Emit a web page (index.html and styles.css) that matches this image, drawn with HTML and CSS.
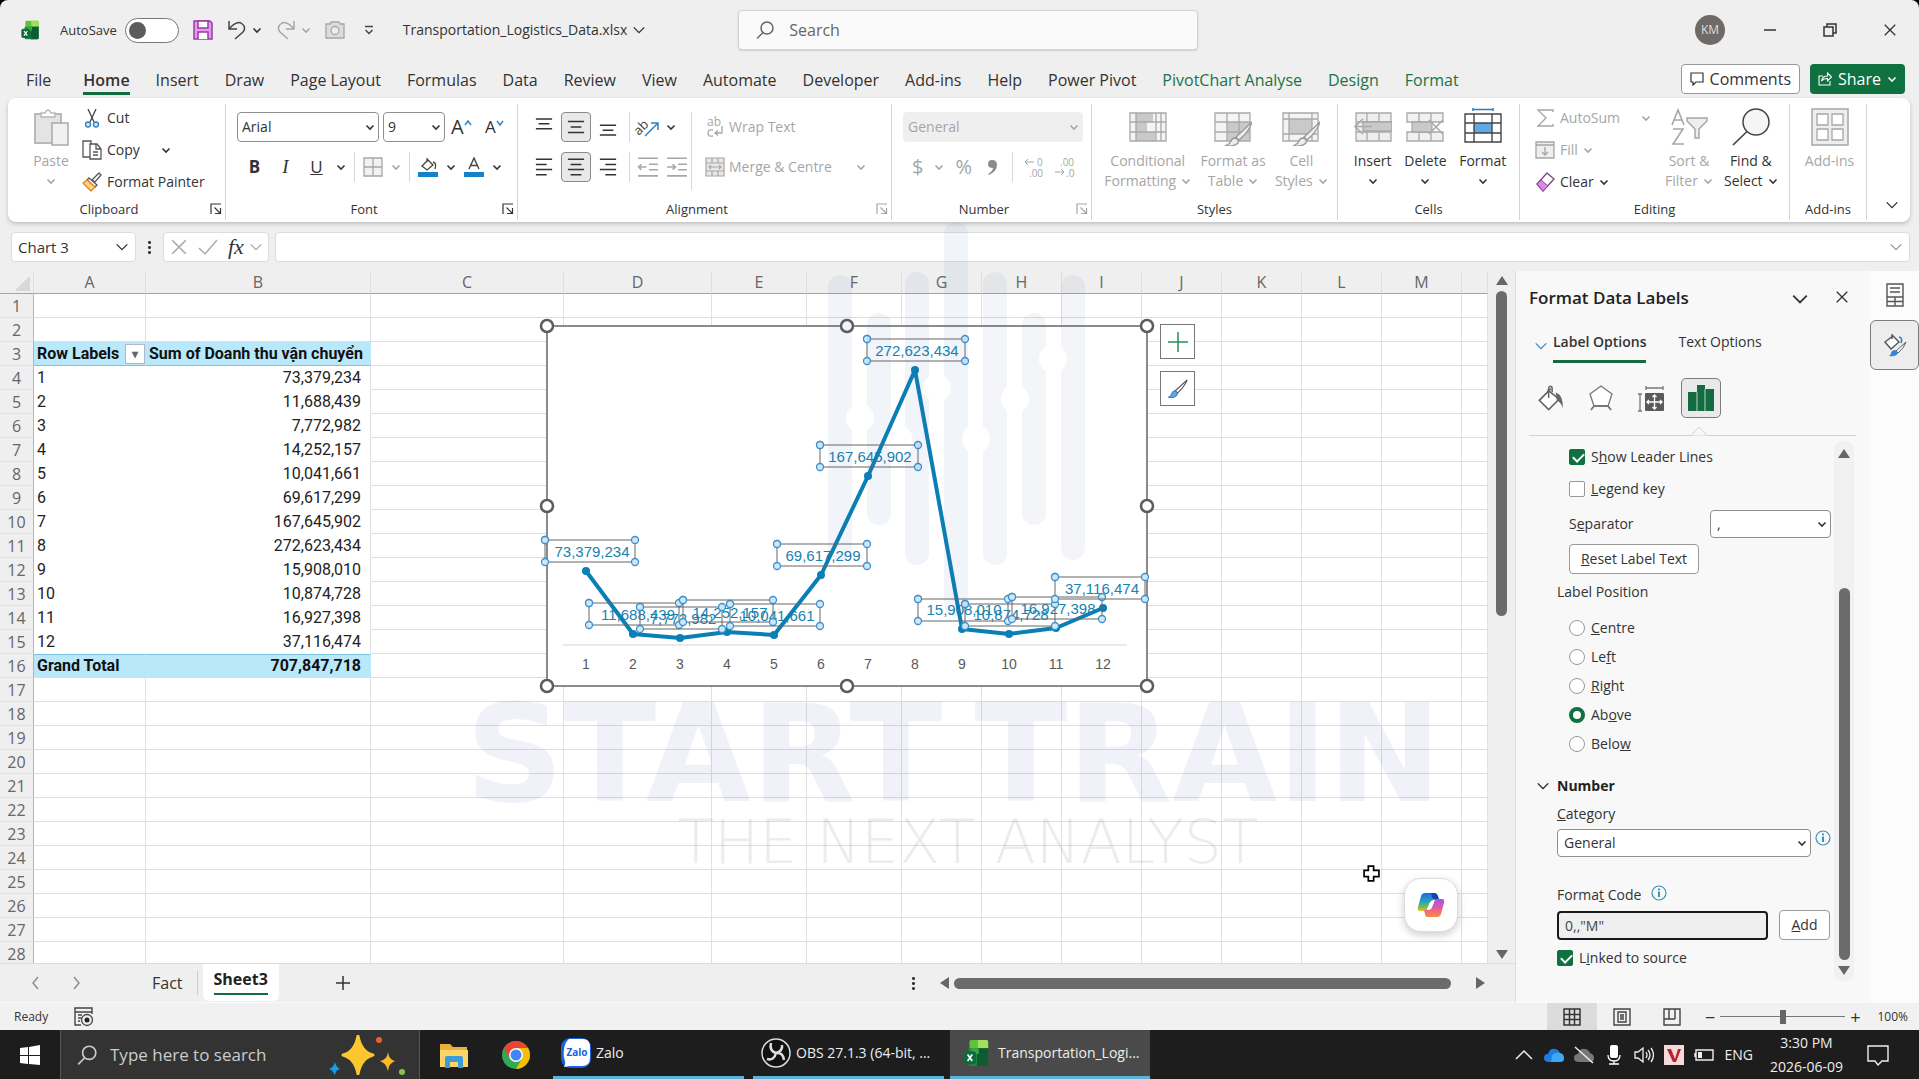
FILE: index.html
```html
<!DOCTYPE html>
<html lang="en">
<head>
<meta charset="utf-8">
<title>Transportation_Logistics_Data.xlsx - Excel</title>
<link rel="stylesheet" href="styles.css">
</head>
<body>
<svg class="sprite" aria-hidden="true">
  <symbol id="chev" viewBox="0 0 10 10"><path d="M1.500 3.500 5 7l3.500-3.500" fill="none" stroke="currentColor" stroke-width="1.600"/></symbol>
  <symbol id="chevbig" viewBox="0 0 16 16"><path d="M2 5l6 6 6-6" fill="none" stroke="currentColor" stroke-width="1.600"/></symbol>
  <symbol id="launch" viewBox="0 0 12 12"><path d="M1 11V1h10M4.500 4.500l5.500 5.500M10.500 5v5.500H5" fill="none" stroke="currentColor" stroke-width="1.200"/></symbol>
  <symbol id="close" viewBox="0 0 16 16"><path d="M2 2l12 12M14 2 2 14" stroke="currentColor" stroke-width="1.500"/></symbol>
  <symbol id="lens" viewBox="0 0 20 20"><circle cx="12" cy="8" r="6" fill="none" stroke="currentColor" stroke-width="1.500"/><path d="M8 12.500 2 18.500" stroke="currentColor" stroke-width="1.500"/></symbol>
  <symbol id="excel" viewBox="0 0 26 30"><path d="M6 3q0-2 2-2h16q2 0 2 2v9H6z" fill="#5fc03c"/><path d="M15 1h9q2 0 2 2v7H15z" fill="#a0e05c"/><path d="M5 10h21v17q0 2-2 2H7q-2 0-2-2z" fill="#1a8a46"/><path d="M14 10h12v17q0 2-2 2H14z" fill="#0f5c33"/><path d="M8 10h8v6H8z" fill="#3aa64a"/><rect y="13" width="13" height="14" rx="3" fill="#0e6b3c"/><path d="M4 16.500l5 7M9 16.500l-5 7" stroke="#fff" stroke-width="1.800"/></symbol>
  <symbol id="al-left" viewBox="0 0 20 20"><path d="M1 1.500h18M1 7.200h12M1 12.800h18M1 18.500h12" stroke="currentColor" stroke-width="1.700"/></symbol>
  <symbol id="al-mid" viewBox="0 0 20 20"><path d="M1 1.500h18M4 7.200h12M1 12.800h18M4 18.500h12" stroke="currentColor" stroke-width="1.700"/></symbol>
  <symbol id="al-right" viewBox="0 0 20 20"><path d="M1 1.500h18M7 7.200h12M1 12.800h18M7 18.500h12" stroke="currentColor" stroke-width="1.700"/></symbol>
  <symbol id="v-top" viewBox="0 0 20 20"><path d="M1 1h18M4 6.500h12M1 12h18" stroke="currentColor" stroke-width="1.700"/></symbol>
  <symbol id="v-mid" viewBox="0 0 20 20"><path d="M1 4h18M4 10h12M1 16h18" stroke="currentColor" stroke-width="1.700"/></symbol>
  <symbol id="v-bot" viewBox="0 0 20 20"><path d="M1 8h18M4 13.500h12M1 19h18" stroke="currentColor" stroke-width="1.700"/></symbol>
  <symbol id="outdent" viewBox="0 0 20 20"><path d="M1 2h18M11 7.500h8M11 12.500h8M1 18h18M8.500 10h-7M4 7.500 1.500 10 4 12.500" fill="none" stroke="currentColor" stroke-width="1.500"/></symbol>
  <symbol id="indent" viewBox="0 0 20 20"><path d="M1 2h18M11 7.500h8M11 12.500h8M1 18h18M1 10h7M6 7.500 8.500 10 6 12.500" fill="none" stroke="currentColor" stroke-width="1.500"/></symbol>
  <symbol id="bucket" viewBox="0 0 24 22"><path d="M9 4 19 12l-9 9-8-8L12 3" fill="#fff" stroke="currentColor" stroke-width="1.400"/><path d="M10 11V3q0-2 1.500-2T13 3v3" fill="none" stroke="currentColor" stroke-width="1.300"/><path d="M16 6q7 3 6 14-1-5-5-7z" fill="currentColor"/></symbol>
  <symbol id="brush" viewBox="0 0 24 24"><path d="M22 2 9 14l2.500 2.500Q20 8 22 2z" fill="#fff" stroke="#555" stroke-width="1.300"/><path d="M8.500 14q3 .5 3 3.500-2 5-10 3.500 3-1 3.500-4 1-3 3.500-3z" fill="#5ba7ea" stroke="#2670b8"/></symbol>
  <symbol id="info" viewBox="0 0 16 16"><circle cx="8" cy="8" r="7" fill="none" stroke="currentColor" stroke-width="1.200"/><path d="M8 6.500v5.500M8 3.500v1.800" stroke="currentColor" stroke-width="2"/></symbol>
  <marker id="grip" markerUnits="userSpaceOnUse" markerWidth="10" markerHeight="10" refX="5" refY="5"><circle cx="5" cy="5" r="3.500" fill="#cde8fb" stroke="#3f8fc9" stroke-width="1.300"/></marker>
  <marker id="dot" markerUnits="userSpaceOnUse" markerWidth="10" markerHeight="10" refX="5" refY="5"><circle cx="5" cy="5" r="4" fill="#0a7fb5"/></marker>
</svg>

<div class="app">
<header class="titlebar">
  <svg class="i20 xl"><use href="#excel"/></svg>
  <label class="autosave">AutoSave <input type="checkbox" class="toggle"></label>
  <div class="quick">
    <button aria-label="Save"><svg class="i20" viewBox="0 0 20 20"><path d="M1 1h16l2 2v16H1z" fill="#e49bea" stroke="#9a3aa6" stroke-width="1.500"/><path d="M5 1h10v7H5zM5 19v-7h10v7" fill="#fff" stroke="#9a3aa6" stroke-width="1.500"/></svg></button>
    <button aria-label="Undo"><svg class="i20" viewBox="0 0 20 20"><path d="M2 1v8h8M2 9Q9 1 14 3q6 4 2 9l-8 7" fill="none" stroke="#444" stroke-width="1.500"/></svg><svg class="chev"><use href="#chev"/></svg></button>
    <button aria-label="Redo" class="off"><svg class="i20" viewBox="0 0 20 20"><path d="M18 1v8h-8M18 9Q11 1 6 3q-6 4-2 9l8 7" fill="none" stroke="currentColor" stroke-width="1.500"/></svg><svg class="chev"><use href="#chev"/></svg></button>
    <button aria-label="Camera" class="off"><svg class="i20" viewBox="0 0 20 20"><path d="M1 4h4l1-2h8l1 2h4v14H1z" fill="#ddd" stroke="currentColor" stroke-width="1.300"/><circle cx="10" cy="10.500" r="4" fill="#eee" stroke="currentColor" stroke-width="1.300"/></svg></button>
    <button aria-label="Customise"><svg class="chev" viewBox="0 0 10 10"><path d="M1 1.500h8M1.500 5 5 8.500 8.500 5" fill="none" stroke="#444" stroke-width="1.400"/></svg></button>
  </div>
  <button class="filename">Transportation_Logistics_Data.xlsx <svg class="i14"><use href="#chevbig"/></svg></button>
  <label class="search"><svg class="i20"><use href="#lens"/></svg><input type="search" placeholder="Search" aria-label="Search"></label>
  <div class="wincontrols">
    <span class="avatar">KM</span>
    <button aria-label="Minimise"><svg class="i14" viewBox="0 0 14 14"><path d="M1 7h12" stroke="#333" stroke-width="1.500"/></svg></button>
    <button aria-label="Restore"><svg class="i14" viewBox="0 0 14 14"><path d="M1 4h9v9H1zM4 4V1h9v9h-3" fill="none" stroke="#333" stroke-width="1.500"/></svg></button>
    <button aria-label="Close"><svg class="i14"><use href="#close"/></svg></button>
  </div>
</header>

<nav class="tabs">
  <a href="#">File</a><a href="#" class="current">Home</a><a href="#">Insert</a><a href="#">Draw</a><a href="#">Page Layout</a><a href="#">Formulas</a><a href="#">Data</a><a href="#">Review</a><a href="#">View</a><a href="#">Automate</a><a href="#">Developer</a><a href="#">Add-ins</a><a href="#">Help</a><a href="#">Power Pivot</a><a href="#" class="ctx">PivotChart Analyse</a><a href="#" class="ctx">Design</a><a href="#" class="ctx">Format</a>
  <span class="grow"></span>
  <button class="comments"><svg class="i14" viewBox="0 0 14 14"><path d="M1 1h12v9H6l-3 3v-3H1z" fill="none" stroke="#333" stroke-width="1.200"/></svg>Comments</button>
  <button class="share"><svg class="i14" viewBox="0 0 14 14"><path d="M5 4H1v9h11V9M3.500 9q1-5 6-5V1l4 4-4 4V6.500q-4 0-6 2.500z" fill="none" stroke="#fff" stroke-width="1.100"/></svg>Share<svg class="chev"><use href="#chev"/></svg></button>
</nav>

<section class="ribbon" aria-label="Home ribbon">
  <div class="group">
    <div class="tools clip">
      <button class="big off"><svg class="i38" viewBox="0 0 38 38"><path d="M3 6h26v29H3z" fill="#e4e4e4" stroke="#b9b9b9" stroke-width="2"/><path d="M9 9V5h4q3-6 6 0h4v4z" fill="#fff" stroke="#b9b9b9" stroke-width="1.500"/><path d="M20 15h16v22H20z" fill="#f1f1f1" stroke="#a9a9a9" stroke-width="1.500"/></svg>Paste<svg class="chev"><use href="#chev"/></svg></button>
      <div class="stack">
        <button><svg class="i20" viewBox="0 0 20 20"><path d="M6 1l6 13M14 1 8 14" stroke="#444" stroke-width="1.300"/><circle cx="6" cy="16.500" r="2.500" fill="#cfe4f7" stroke="#2f7fc0" stroke-width="1.300"/><circle cx="14" cy="16.500" r="2.500" fill="#cfe4f7" stroke="#2f7fc0" stroke-width="1.300"/></svg>Cut</button>
        <button><svg class="i20" viewBox="0 0 20 20"><path d="M8 17H1V1h8v3M8 4h7l4 5v10H8zM14 4v5h5M11 12h5M11 15h5" fill="none" stroke="#555" stroke-width="1.300"/></svg>Copy<svg class="chev far"><use href="#chev"/></svg></button>
        <button><svg class="i20" viewBox="0 0 20 20"><path d="M10 8l7-7 2 2-6 7z" fill="#fff" stroke="#555" stroke-width="1.300"/><path d="M7 6l8 7-2 2-8-7z" fill="#fff" stroke="#555" stroke-width="1.300"/><path d="M5 8 1 11l8 8 4-4z" fill="#fbd08b" stroke="#e08a1e" stroke-width="1.300"/></svg>Format Painter</button>
      </div>
    </div>
    <h2>Clipboard<svg class="launch"><use href="#launch"/></svg></h2>
  </div>

  <div class="group">
    <div class="tools rows">
      <div class="row">
        <span class="pick fontname"><select aria-label="Font"><option>Arial</option></select><svg class="chev"><use href="#chev"/></svg></span>
        <span class="pick fontsize"><select aria-label="Font size"><option>9</option></select><svg class="chev"><use href="#chev"/></svg></span>
        <button aria-label="Grow font" class="fontstep">A<svg class="tiny" viewBox="0 0 8 8"><path d="M1 6l3-4 3 4" fill="none" stroke="#2a86c4" stroke-width="1.500"/></svg></button>
        <button aria-label="Shrink font" class="fontstep small">A<svg class="tiny" viewBox="0 0 8 8"><path d="M1 2l3 4 3-4" fill="none" stroke="#2a86c4" stroke-width="1.500"/></svg></button>
      </div>
      <div class="row">
        <button class="fmt b">B</button><button class="fmt it">I</button><button class="fmt u">U</button><svg class="chev"><use href="#chev"/></svg><i class="bar"></i>
        <button class="off" aria-label="Borders"><svg class="i20" viewBox="0 0 20 20"><path d="M1 1h18v18H1zM10 1v18M1 10h18" fill="#f2f2f2" stroke="currentColor" stroke-width="1.300"/></svg></button><svg class="chev off"><use href="#chev"/></svg><i class="bar"></i>
        <button aria-label="Fill colour"><svg class="i20" viewBox="0 0 20 20"><path d="M9 1v4M4 9l6-6 5 5-6 5zM15 5q4 1 2 7" fill="none" stroke="#444" stroke-width="1.300"/><path d="M0 15h20v5H0z" fill="#1581c8"/></svg></button><svg class="chev"><use href="#chev"/></svg>
        <button aria-label="Font colour"><svg class="i20" viewBox="0 0 20 20"><path d="M5 12l5-11 5 11M7 8.500h6" fill="none" stroke="#444" stroke-width="1.400"/><path d="M0 15h20v5H0z" fill="#1581c8"/></svg></button><svg class="chev"><use href="#chev"/></svg>
      </div>
    </div>
    <h2>Font<svg class="launch"><use href="#launch"/></svg></h2>
  </div>

  <div class="group">
    <div class="tools align">
      <div class="rows">
        <div class="row tight">
          <button class="sq" aria-label="Top"><svg class="i18"><use href="#v-top"/></svg></button><button class="sq on" aria-label="Middle"><svg class="i18"><use href="#v-mid"/></svg></button><button class="sq" aria-label="Bottom"><svg class="i18"><use href="#v-bot"/></svg></button><i class="bar"></i>
          <button aria-label="Orientation"><svg class="i22 spill" viewBox="0 0 22 22"><text x="-4" y="14" transform="rotate(-45 6 10)" font-size="13" fill="#444">ab</text><path d="M8 20 20 8M14 7h7v7" fill="none" stroke="#2a86c4" stroke-width="1.500"/></svg></button><svg class="chev"><use href="#chev"/></svg>
        </div>
        <div class="row tight">
          <button class="sq" aria-label="Left"><svg class="i18"><use href="#al-left"/></svg></button><button class="sq on" aria-label="Centre"><svg class="i18"><use href="#al-mid"/></svg></button><button class="sq" aria-label="Right"><svg class="i18"><use href="#al-right"/></svg></button><i class="bar"></i>
          <button class="off" aria-label="Outdent"><svg class="i22"><use href="#outdent"/></svg></button><button class="off" aria-label="Indent"><svg class="i22"><use href="#indent"/></svg></button>
        </div>
      </div>
      <i class="bar tall"></i>
      <div class="rows wrapcol">
        <button class="row off"><svg class="i20 spill" viewBox="0 0 20 20"><text x="2" y="9" font-size="12" fill="currentColor">ab</text><path d="M8 13q-5-1-5 3t5 3M17 9v7h-6M13 13.500l-3 2.500 3 2.500" fill="none" stroke="currentColor" stroke-width="1.300"/></svg>Wrap Text</button>
        <button class="row off"><svg class="i20" viewBox="0 0 20 20"><path d="M1 1h18v18H1zM1 6h18M1 14h18M7 1v5M13 1v5M7 14v5M13 14v5M4 10h12M6 8l-2 2 2 2M14 8l2 2-2 2" fill="#e8e8e8" stroke="currentColor" stroke-width="1.200"/></svg>Merge &amp; Centre<svg class="chev far"><use href="#chev"/></svg></button>
      </div>
    </div>
    <h2>Alignment<svg class="launch off"><use href="#launch"/></svg></h2>
  </div>

  <div class="group">
    <div class="tools rows">
      <div class="row"><span class="pick numfmt off"><select aria-label="Number format" disabled><option>General</option></select><svg class="chev"><use href="#chev"/></svg></span></div>
      <div class="row off numbers"><button class="sym">$</button><svg class="chev"><use href="#chev"/></svg><button class="sym">%</button><button aria-label="Comma style"><svg class="i18" viewBox="0 0 18 18"><path d="M9 2q5 0 5 5 0 6-8 10l-1-1q5-3 5-6-5 0-5-4 0-4 4-4z" fill="#8c8c8c"/></svg></button><i class="bar"></i>
        <button aria-label="Increase decimal"><svg class="i20 spill" viewBox="0 0 20 20"><text x="13" y="9" font-size="10" fill="currentColor">0</text><text x="5" y="20" font-size="10" fill="currentColor">.00</text><path d="M10 5H1M4 2 1 5l3 3" fill="none" stroke="currentColor"/></svg></button>
        <button aria-label="Decrease decimal"><svg class="i20 spill" viewBox="0 0 20 20"><text x="5" y="9" font-size="10" fill="currentColor">.00</text><text x="11" y="20" font-size="10" fill="currentColor">.0</text><path d="M0 15h9M6 12l3 3-3 3" fill="none" stroke="currentColor"/></svg></button></div>
    </div>
    <h2>Number<svg class="launch off"><use href="#launch"/></svg></h2>
  </div>

  <div class="group">
    <div class="tools bigs">
      <button class="big off"><svg class="i38" viewBox="0 0 38 38"><path d="M1 5h36v28H1z" fill="#f4f4f4"/><path d="M7 5h17v9H7zM7 14h11v10H7zM7 24h19v9H7z" fill="#c9c9c9"/><path d="M1 5h36v28H1zM1 14h36M1 24h36M7 5v28M27 5v28M32 5v28" fill="none" stroke="#a9a9a9" stroke-width="1.300"/></svg>Conditional<span>Formatting <svg class="chev"><use href="#chev"/></svg></span></button>
      <button class="big off"><svg class="i38" viewBox="0 0 38 38"><path d="M1 5h35v28H1z" fill="#f4f4f4"/><path d="M13 14h23v19H13z" fill="#c9c9c9"/><path d="M1 5h35v28H1zM1 14h35M1 24h35M13 5v28M25 5v28" fill="none" stroke="#a9a9a9" stroke-width="1.300"/><path d="M38 14 22 29l3 3q10-8 13-18zM21 30q4 1 3 5-4 4-13 3 5-2 6-5 1-3 4-3z" fill="#eee" stroke="#999" stroke-width="1.300"/></svg>Format as<span>Table <svg class="chev"><use href="#chev"/></svg></span></button>
      <button class="big off"><svg class="i38" viewBox="0 0 38 38"><path d="M1 5h35v28H1z" fill="#f4f4f4"/><path d="M7 11h23v15H7z" fill="#c9c9c9"/><path d="M1 5h35v28H1zM1 11h35M1 26h35M7 5v28M30 5v28" fill="none" stroke="#a9a9a9" stroke-width="1.300"/><path d="M38 14 22 29l3 3q10-8 13-18zM21 30q4 1 3 5-4 4-13 3 5-2 6-5 1-3 4-3z" fill="#eee" stroke="#999" stroke-width="1.300"/></svg>Cell<span>Styles <svg class="chev"><use href="#chev"/></svg></span></button>
    </div>
    <h2>Styles</h2>
  </div>

  <div class="group">
    <div class="tools bigs">
      <button class="big"><svg class="i38" viewBox="0 0 38 38"><path d="M2 5h35v28H2zM2 14h35M2 24h35M13 5v28M25 5v28" fill="#eee" stroke="#a9a9a9" stroke-width="1.300"/><path d="M9 14h29v9H9z" fill="#c9c9c9" stroke="#999"/><path d="M18 18.500H1M9 11l-8 7.500L9 26" fill="none" stroke="#aaa" stroke-width="1.600"/></svg>Insert<svg class="chev"><use href="#chev"/></svg></button>
      <button class="big"><svg class="i38" viewBox="0 0 38 38"><path d="M1 5h36v9H1zM1 24h36v9H1zM13 5v9M25 5v9M13 24v9M25 24v9" fill="#f1f1f1" stroke="#a9a9a9" stroke-width="1.300"/><path d="M6 14h20v10H6z" fill="#c9c9c9" stroke="#999"/><path d="M23 12l14 14M37 12 23 26" stroke="#aaa" stroke-width="1.600"/></svg>Delete<svg class="chev"><use href="#chev"/></svg></button>
      <button class="big"><svg class="i38" viewBox="0 0 38 38"><path d="M1 6h36v28H1z" fill="#fff"/><path d="M10 15h18v10H10z" fill="#5cabe8"/><path d="M1 6h36v28H1zM1 15h36M1 25h36M10 6v28M28 6v28" fill="none" stroke="#444" stroke-width="1.400"/><path d="M9 1.500h20M9 0v3M29 0v3" stroke="#2a7ec0" stroke-width="1.500"/></svg>Format<svg class="chev"><use href="#chev"/></svg></button>
    </div>
    <h2>Cells</h2>
  </div>

  <div class="group">
    <div class="tools editing">
      <div class="stack">
        <button class="off"><svg class="i20" viewBox="0 0 20 20"><path d="M18 4V2H3l8 8-8 8h15v-2" fill="none" stroke="currentColor" stroke-width="1.400"/></svg>AutoSum<svg class="chev far"><use href="#chev"/></svg></button>
        <button class="off"><svg class="i20" viewBox="0 0 20 20"><path d="M1 2h18v16H1zM1 5h18" fill="#eee" stroke="currentColor" stroke-width="1.300"/><path d="M10 7v8M7 12l3 3 3-3" fill="none" stroke="currentColor" stroke-width="1.300"/></svg>Fill<svg class="chev"><use href="#chev"/></svg></button>
        <button><svg class="i20" viewBox="0 0 20 20"><path d="M2 12 12 1l7 6L8 19z" fill="#fff" stroke="#7d4a86" stroke-width="1.400"/><path d="M2 12l4-4 7 6-5 5z" fill="#d98be0" stroke="#9a3aa6"/></svg>Clear<svg class="chev"><use href="#chev"/></svg></button>
      </div>
      <button class="big off"><svg class="i38" viewBox="0 0 38 38"><path d="M2 17 8 2l6 15M4 12h8M3 21h10L3 36h11" fill="none" stroke="currentColor" stroke-width="1.600"/><path d="M17 10h20v3l-8 8v9h-4v-9l-8-8z" fill="#eee" stroke="currentColor" stroke-width="1.500"/></svg>Sort &amp;<span>Filter <svg class="chev"><use href="#chev"/></svg></span></button>
      <button class="big"><svg class="i38" viewBox="0 0 38 38"><circle cx="24" cy="14" r="13" fill="#f5f5f5" stroke="#444" stroke-width="1.500"/><path d="M15 23.500 1 37" stroke="#444" stroke-width="1.700"/></svg>Find &amp;<span>Select <svg class="chev"><use href="#chev"/></svg></span></button>
    </div>
    <h2>Editing</h2>
  </div>

  <div class="group">
    <div class="tools bigs">
      <button class="big off"><svg class="i38" viewBox="0 0 38 38"><path d="M1 1h36v36H1z" fill="#eee" stroke="currentColor" stroke-width="1.500"/><path d="M6 6h11v11H6zM21 6h11v11H21zM6 21h11v11H6zM21 21h11v11H21z" fill="#fff" stroke="currentColor" stroke-width="1.300"/></svg>Add-ins</button>
    </div>
    <h2>Add-ins</h2>
  </div>
  <div class="collapse"><svg class="i14"><use href="#chevbig"/></svg></div>
</section>

<div class="formulabar">
  <label class="namebox"><input value="Chart 3" aria-label="Name box"><svg class="i14"><use href="#chevbig"/></svg></label>
  <span class="dots"></span>
  <div class="fx"><svg class="i18"><use href="#close"/></svg><svg class="i20" viewBox="0 0 20 20"><path d="M1 11l6 6L19 3" fill="none" stroke="currentColor" stroke-width="1.500"/></svg><em>fx</em><svg class="i14"><use href="#chevbig"/></svg></div>
  <label class="formula"><input aria-label="Formula"><svg class="i14"><use href="#chevbig"/></svg></label>
</div>

<main class="work">
  <div class="book">
    <div class="sheet">
      <table class="cells">
        <colgroup><col class="rh"><col class="ca"><col class="cb"><col class="cc"><col class="cd"><col class="ce"><col class="cf"><col class="cg"><col class="cg"><col class="cg"><col class="cg"><col class="cg"><col class="cg"><col class="cg"><col></colgroup>
        <thead><tr><th class="corner"><th>A<th>B<th>C<th>D<th>E<th>F<th>G<th>H<th>I<th>J<th>K<th>L<th>M<th></tr></thead>
        <tbody>
        <tr><th>1<td><td><td><td><td><td><td><td><td><td><td><td><td><td></tr>
        <tr><th>2<td><td><td><td><td><td><td><td><td><td><td><td><td><td></tr>
        <tr class="head"><th>3<td><span class="rl">Row Labels <button aria-label="Filter">▾</button></span><td>Sum of Doanh thu vận chuyển<td><td><td><td><td><td><td><td><td><td><td><td></tr>
        <tr class="data"><th>4<td>1<td>73,379,234<td><td><td><td><td><td><td><td><td><td><td><td></tr>
        <tr class="data"><th>5<td>2<td>11,688,439<td><td><td><td><td><td><td><td><td><td><td><td></tr>
        <tr class="data"><th>6<td>3<td>7,772,982<td><td><td><td><td><td><td><td><td><td><td><td></tr>
        <tr class="data"><th>7<td>4<td>14,252,157<td><td><td><td><td><td><td><td><td><td><td><td></tr>
        <tr class="data"><th>8<td>5<td>10,041,661<td><td><td><td><td><td><td><td><td><td><td><td></tr>
        <tr class="data"><th>9<td>6<td>69,617,299<td><td><td><td><td><td><td><td><td><td><td><td></tr>
        <tr class="data"><th>10<td>7<td>167,645,902<td><td><td><td><td><td><td><td><td><td><td><td></tr>
        <tr class="data"><th>11<td>8<td>272,623,434<td><td><td><td><td><td><td><td><td><td><td><td></tr>
        <tr class="data"><th>12<td>9<td>15,908,010<td><td><td><td><td><td><td><td><td><td><td><td></tr>
        <tr class="data"><th>13<td>10<td>10,874,728<td><td><td><td><td><td><td><td><td><td><td><td></tr>
        <tr class="data"><th>14<td>11<td>16,927,398<td><td><td><td><td><td><td><td><td><td><td><td></tr>
        <tr class="data"><th>15<td>12<td>37,116,474<td><td><td><td><td><td><td><td><td><td><td><td></tr>
        <tr class="total"><th>16<td>Grand Total<td>707,847,718<td><td><td><td><td><td><td><td><td><td><td><td></tr>
        <tr><th>17<td><td><td><td><td><td><td><td><td><td><td><td><td><td></tr>
        <tr><th>18<td><td><td><td><td><td><td><td><td><td><td><td><td><td></tr>
        <tr><th>19<td><td><td><td><td><td><td><td><td><td><td><td><td><td></tr>
        <tr><th>20<td><td><td><td><td><td><td><td><td><td><td><td><td><td></tr>
        <tr><th>21<td><td><td><td><td><td><td><td><td><td><td><td><td><td></tr>
        <tr><th>22<td><td><td><td><td><td><td><td><td><td><td><td><td><td></tr>
        <tr><th>23<td><td><td><td><td><td><td><td><td><td><td><td><td><td></tr>
        <tr><th>24<td><td><td><td><td><td><td><td><td><td><td><td><td><td></tr>
        <tr><th>25<td><td><td><td><td><td><td><td><td><td><td><td><td><td></tr>
        <tr><th>26<td><td><td><td><td><td><td><td><td><td><td><td><td><td></tr>
        <tr><th>27<td><td><td><td><td><td><td><td><td><td><td><td><td><td></tr>
        <tr><th>28<td><td><td><td><td><td><td><td><td><td><td><td><td><td></tr>
        </tbody>
      </table>

      <svg class="chart" width="600" height="360" viewBox="0 0 600 360" role="img" aria-label="Line chart of revenue by month">
        <rect width="600" height="360" fill="#fff" stroke="#666" stroke-width="1.500"/>
        <path d="M16 319h564" stroke="#d5d5d5"/>
        <g class="axis"><text x="39" y="343">1</text><text x="86" y="343">2</text><text x="133" y="343">3</text><text x="180" y="343">4</text><text x="227" y="343">5</text><text x="274" y="343">6</text><text x="321" y="343">7</text><text x="368" y="343">8</text><text x="415" y="343">9</text><text x="462" y="343">10</text><text x="509" y="343">11</text><text x="556" y="343">12</text></g>
        <g class="values"><text x="45" y="231">73,379,234</text><text x="91" y="294">11,688,439</text><text x="136" y="298">7,772,982</text><text x="183" y="292">14,252,157</text><text x="230" y="295">10,041,661</text><text x="276" y="235">69,617,299</text><text x="323" y="136">167,645,902</text><text x="370" y="30">272,623,434</text><text x="417" y="289">15,908,010</text><text x="464" y="294">10,874,728</text><text x="511" y="288">16,927,398</text><text x="555" y="268">37,116,474</text></g>
        <path class="series" d="M39 245 86 308 133 312 180 306 227 309 274 249 321 150 368 44 415 303 462 308 509 302 556 282"/>
        <g class="boxes"><path d="M-2 214h90v22h-90z"/><path d="M42 277h90v22h-90z"/><path d="M93 281h82v22h-82z"/><path d="M136 274h90v22h-90z"/><path d="M183 278h90v22h-90z"/><path d="M230 218h90v22h-90z"/><path d="M273 119h98v22h-98z"/><path d="M320 13h98v22h-98z"/><path d="M371 273h90v22h-90z"/><path d="M418 278h90v22h-90z"/><path d="M465 271h90v22h-90z"/><path d="M508 251h90v22h-90z"/></g>
        <g fill="#fff" stroke="#5c5c5c" stroke-width="2.500"><circle r="6"/><circle cx="300" r="6"/><circle cx="600" r="6"/><circle cy="180" r="6"/><circle cx="600" cy="180" r="6"/><circle cy="360" r="6"/><circle cx="300" cy="360" r="6"/><circle cx="600" cy="360" r="6"/></g>
      </svg>
      <div class="chartbtns">
        <button aria-label="Chart elements"><svg class="i22" viewBox="0 0 22 22"><path d="M11 1v20M1 11h20" stroke="#2a8a5a" stroke-width="1.500"/></svg></button>
        <button aria-label="Chart styles"><svg class="i22"><use href="#brush"/></svg></button>
      </div>
      <svg class="cursor" viewBox="0 0 16 16"><path d="M5 1h5v4h5v6h-5v4H5v-4H1V5h4z" fill="#fff" stroke="#000" stroke-width="1.600"/></svg>
      <button class="copilot" aria-label="Copilot"><svg class="i28" viewBox="0 0 28 28"><defs><linearGradient id="cp1" x2="0" y2="1"><stop offset="0" stop-color="#1a6fe0"/><stop offset=".5" stop-color="#2aa5b8"/><stop offset=".8" stop-color="#7ac143"/><stop offset="1" stop-color="#f6c030"/></linearGradient><linearGradient id="cp2" x2="0" y2="1"><stop offset="0" stop-color="#9a58e8"/><stop offset=".5" stop-color="#e85a9c"/><stop offset="1" stop-color="#f98a3c"/></linearGradient></defs><path d="M8 2h9q3 0 3 3l1 4h-4q-3 0-4 3l-2 5q-1 3-3 3H3q-3 0-2-4L4 5q1-3 4-3z" fill="url(#cp1)"/><path d="M20 26h-9q-3 0-3-3l-1-4h4q3 0 4-3l2-5q1-3 3-3h5q3 0 2 4l-3 11q-1 3-4 3z" fill="url(#cp2)"/><path d="M12 2h5q3 0 4 3l1 3h-4q-3 0-3-3t-3-3z" fill="#1a3fb0"/><path d="M13 11h4l-3 7h-4z" fill="#fff"/></svg></button>
    </div>
    <div class="vscroll"><i class="up"></i><i class="thumb"></i><i class="grow"></i><i class="down"></i></div>
    <div class="sheettabs">
      <button class="nav" aria-label="Previous sheet"><svg class="i14" viewBox="0 0 14 14"><path d="M9 1 4 7l5 6" fill="none" stroke="currentColor" stroke-width="1.400"/></svg></button>
      <button class="nav" aria-label="Next sheet"><svg class="i14" viewBox="0 0 14 14"><path d="M5 1l5 6-5 6" fill="none" stroke="currentColor" stroke-width="1.400"/></svg></button>
      <a href="#" class="tab">Fact</a><a href="#" class="tab active"><span>Sheet3</span></a>
      <button class="add" aria-label="New sheet"><svg class="i14" viewBox="0 0 14 14"><path d="M7 0v14M0 7h14" stroke="#333" stroke-width="1.500"/></svg></button>
      <span class="grow"></span>
      <span class="dots"></span>
      <div class="hscroll"><i class="left"></i><i class="thumb"></i><i class="right"></i></div>
    </div>
  </div>

  <aside class="pane">
    <div class="panehead"><h1>Format Data Labels</h1><svg class="i18"><use href="#chevbig"/></svg><svg class="i14"><use href="#close"/></svg></div>
    <div class="panetabs"><svg class="i14"><use href="#chevbig"/></svg><a href="#" class="current">Label Options</a><a href="#">Text Options</a></div>
    <div class="paneicons">
      <button aria-label="Fill and line"><svg class="i28" viewBox="0 0 24 22"><use href="#bucket"/></svg></button>
      <button aria-label="Effects"><svg class="i28" viewBox="0 0 28 28"><path d="M14 2 25 10l-4 12H7L3 10z" fill="#fff" stroke="#777" stroke-width="1.300"/><path d="M7 22h14l3 4M7 22l-3 4" fill="none" stroke="#777" stroke-width="1.800"/></svg></button>
      <button aria-label="Size"><svg class="i28" viewBox="0 0 28 28"><rect x="8" y="9" width="19" height="18" rx="1" fill="#5a5a5a"/><path d="M17.500 11v14M10 18h15M15.500 13l2-2 2 2M15.500 23l2 2 2-2M12 16l-2 2 2 2M23 16l2 2-2 2" fill="none" stroke="#fff" stroke-width="1.300"/><path d="M9 4h17M9 2v4M26 2v4M3 10v17M1 10h4M1 27h4" stroke="#777" stroke-width="1.300"/></svg></button>
      <button class="on" aria-label="Label options"><svg class="i28" viewBox="0 0 28 28"><path d="M1 8h9v19H1zM10 1h8v26h-8zM18 5h9v22h-9z" fill="#156b41"/><path d="M10 8v19M18 5v22" stroke="#e8e8e8" stroke-width=".8"/></svg></button>
    </div>
    <svg class="notch" viewBox="0 0 18 10"><path d="M0 9.500h1L9 1l8 8.500h1" fill="#f8f8f8" stroke="#d2d2d2"/></svg>
    <div class="panebody">
      <form class="opts">
        <div class="sub">
          <label class="opt"><input type="checkbox" checked><span>S<u>h</u>ow Leader Lines</span></label>
          <label class="opt"><input type="checkbox"><span><u>L</u>egend key</span></label>
          <div class="sep"><label for="sepsel">S<u>e</u>parator</label><span class="pick sepsel"><select id="sepsel"><option>,</option></select><svg class="chev"><use href="#chev"/></svg></span></div>
          <button type="button" class="btn reset"><span><u>R</u>eset Label Text</span></button>
        </div>
        <div class="lp">Label Position</div>
        <div class="sub radios">
          <label class="opt"><input type="radio" name="pos"><span><u>C</u>entre</span></label>
          <label class="opt"><input type="radio" name="pos"><span>Le<u>f</u>t</span></label>
          <label class="opt"><input type="radio" name="pos"><span><u>R</u>ight</span></label>
          <label class="opt"><input type="radio" name="pos" checked><span>Ab<u>o</u>ve</span></label>
          <label class="opt"><input type="radio" name="pos"><span>Belo<u>w</u></span></label>
        </div>
        <h3><svg class="i14"><use href="#chevbig"/></svg>Number</h3>
        <label class="cap" for="cat"><span><u>C</u>ategory</span></label>
        <div class="line catline"><span class="pick cat"><select id="cat"><option>General</option></select><svg class="chev"><use href="#chev"/></svg></span><svg class="info"><use href="#info"/></svg></div>
        <label class="cap code" for="code"><span>Forma<u>t</u> Code</span><svg class="info"><use href="#info"/></svg></label>
        <div class="line"><input id="code" class="codebox" value="0,,&quot;M&quot;"><button type="button" class="btn addbtn"><span><u>A</u>dd</span></button></div>
        <label class="opt linked"><input type="checkbox" checked><span>L<u>i</u>nked to source</span></label>
      </form>
      <div class="pscroll"><i class="up"></i><i class="grow"></i><i class="thumb"></i><i class="down"></i></div>
    </div>
  </aside>

  <div class="rail">
    <button aria-label="PivotChart fields"><svg class="i24" viewBox="0 0 24 24"><path d="M4 1h16v22H4zM7 5h10M7 9h10M4 14h16M4 18.500h16M12 14v9" fill="none" stroke="#555" stroke-width="1.400"/></svg></button>
    <button class="on" aria-label="Format pane"><svg class="i24" viewBox="0 0 24 24"><path d="M9 1v5M2 9l8-6 6 6-8 7z" fill="#fff" stroke="#555" stroke-width="1.400"/><path d="M16 4q4 1 2 6" fill="none" stroke="#2a7ec0" stroke-width="1.500"/><path d="M23 9 13 18l2 2q6-5 8-11z" fill="#fff" stroke="#555"/><path d="M12 17q3 1 3 3-2 4-9 3 2-1 2-3 1-3 4-3z" fill="#2f86d8"/></svg></button>
  </div>
</main>

<footer class="status">
  <span>Ready</span>
  <svg class="i20 rec" viewBox="0 0 20 20"><path d="M7 18H1V1h17v6M1 5h17M4 8h4M4 11h3M4 14h2" fill="none" stroke="#444" stroke-width="1.400"/><circle cx="13" cy="13" r="5.500" fill="#eee" stroke="#444" stroke-width="1.300"/><circle cx="13" cy="13" r="2.500" fill="#222"/></svg>
  <span class="grow"></span>
  <button class="on" aria-label="Normal view"><svg class="i18" viewBox="0 0 18 18"><path d="M1 1h16v16H1zM6.500 1v16M11.500 1v16M1 6.500h16M1 11.500h16" fill="none" stroke="#333" stroke-width="1.500"/></svg></button>
  <button aria-label="Page layout"><svg class="i18" viewBox="0 0 18 18"><path d="M1 1h16v16H1zM5 4h8v10H5zM7 7h4M7 9h4M7 11h4" fill="none" stroke="#444" stroke-width="1.400"/></svg></button>
  <button aria-label="Page break"><svg class="i18" viewBox="0 0 18 18"><path d="M1 1h16v16H1zM6 1v10M12 1v10M1 11h11" fill="none" stroke="#444" stroke-width="1.400"/></svg></button>
  <div class="zoom"><span>−</span><input type="range" aria-label="Zoom" min="0" max="200" value="100"><span>+</span></div>
  <span class="pct">100%</span>
</footer>

<svg class="watermark" width="985" height="670" viewBox="464 222 985 670" aria-hidden="true">
  <defs><mask id="knobs" maskUnits="userSpaceOnUse" x="820" y="222" width="300" height="400"><rect x="820" y="222" width="300" height="400" fill="#fff"/><g fill="#000"><circle cx="860" cy="418" r="14"/><circle cx="899" cy="440" r="14"/><circle cx="937" cy="388" r="14"/><circle cx="976" cy="439" r="14"/><circle cx="1015" cy="399" r="14"/><circle cx="1053" cy="359" r="14"/></g></mask></defs>
  <g mask="url(#knobs)"><g fill="#3a6ab0" fill-opacity=".07"><rect x="828" y="275" width="24" height="285" rx="12"/><rect x="867" y="313" width="24" height="212" rx="12"/><rect x="905" y="272" width="24" height="293" rx="12"/><rect x="944" y="222" width="24" height="394" rx="12"/></g><g fill="#3a50a0" fill-opacity=".06"><rect x="983" y="272" width="24" height="293" rx="12"/><rect x="1022" y="313" width="24" height="212" rx="12"/><rect x="1061" y="275" width="24" height="285" rx="12"/></g></g>
  <text class="wm1" x="704" y="801">START</text>
  <text class="wm1" x="1208" y="801">TRAIN</text>
  <text class="wm2" x="968" y="863">THE NEXT ANALYST</text>
</svg>
</div>

<footer class="taskbar">
  <button class="start" aria-label="Start"><svg class="i20" viewBox="0 0 20 20"><path d="M0 3l8-1v8H0zM9 2l11-2v10H9zM0 11h8v8l-8-1zM9 11h11v9L9 19z" fill="#fff"/></svg></button>
  <label class="tsearch"><svg class="i22"><use href="#lens"/></svg><input type="search" placeholder="Type here to search" aria-label="Type here to search"><svg class="spark" viewBox="0 0 78 40"><path d="M29 1q3 16 15 19-12 3-15 19-3-16-15-19Q26 17 29 1z" fill="#fcc62e" stroke="#fcc62e" stroke-width="3" stroke-linejoin="round"/><path d="M59 17q1 8 7 9-6 2-7 10-2-8-8-10 7-1 8-9z" fill="#f7b928"/><path d="M6 27q1 5 5 7-5 1-5 7-2-6-6-7 5-2 6-7z" fill="#1c9be8"/><circle cx="50" cy="5" r="3" fill="#e8632a"/><circle cx="73" cy="37" r="3" fill="#8cc152"/></svg></label>
  <button class="pin" aria-label="File Explorer"><svg class="i30" viewBox="0 0 30 30"><path d="M1 4h10l3 3h14v20H1z" fill="#e9b13c"/><path d="M1 10h28v17H1z" fill="#fbd667"/><path d="M6 28V18q0-2 2-2h14q2 0 2 2v10h-5v-6h-8v6z" fill="#3f9bd8"/></svg></button>
  <button class="pin" aria-label="Chrome"><svg class="i30" viewBox="0 0 30 30"><circle cx="15" cy="15" r="14" fill="#34a853"/><path d="M15 15 2.900 8A14 14 0 0 1 27.100 8z" fill="#ea4335"/><path d="M15 8h12.100A14 14 0 0 1 15 29l6-10.500z" fill="#fbbc05"/><path d="M2.900 8 9 18.500 15 15V8z" fill="#ea4335"/><circle cx="15" cy="15" r="7" fill="#fff"/><circle cx="15" cy="15" r="5.500" fill="#4285f4"/></svg></button>
  <button class="task"><svg class="i30" viewBox="0 0 30 30"><rect width="30" height="30" rx="9" fill="#1763e0"/><path d="M8 1h14q7 0 7 8v11q0 8-8 8H9l-6 1q2-3 1-6-2-5-1-12 1-7 5-10z" fill="#fff"/><text x="16" y="18" text-anchor="middle" font-size="10" font-weight="700" fill="#1763e0">Zalo</text></svg>Zalo</button>
  <button class="task"><svg class="i30" viewBox="0 0 30 30"><circle cx="15" cy="15" r="14" fill="#111" stroke="#ddd" stroke-width="1.500"/><path d="M10 5q-2 8 5 10 7-1 8 7M15 15q-2 8-9 6M15 15q7-2 6-8" fill="none" stroke="#ddd" stroke-width="2.500"/></svg>OBS 27.1.3 (64-bit, ...</button>
  <button class="task active"><svg class="i28"><use href="#excel"/></svg>Transportation_Logi...</button>
  <span class="grow"></span>
  <div class="tray">
    <svg class="i20" viewBox="0 0 20 20"><path d="M2 14l8-8 8 8" fill="none" stroke="#eee" stroke-width="1.500"/></svg>
    <svg class="i20" viewBox="0 0 20 20"><path d="M5 17q-5 0-5-4 0-4 4-4 2-6 7-5 3 0 5 4 4 1 4 5 0 4-4 4z" fill="#1b7fe0"/><path d="M8 10q3-3 8-2 4 1 4 5 0 4-4 4H7z" fill="#3ea8f5"/></svg>
    <svg class="i20" viewBox="0 0 20 20"><path d="M5 17q-5 0-5-4 0-4 4-4 2-6 7-5 3 0 5 4 4 1 4 5 0 4-4 4z" fill="#777"/><path d="M1 2l18 16" stroke="#eee" stroke-width="1.500"/></svg>
    <svg class="i20" viewBox="0 0 20 20"><rect x="6" y="0" width="8" height="13" rx="2" fill="#fff"/><path d="M4 10q0 6 6 6t6-6M10 16v3M5 19h10" fill="none" stroke="#fff" stroke-width="1.300"/></svg>
    <svg class="i20" viewBox="0 0 20 20"><path d="M1 7h3l5-4v14l-5-4H1zM12 7q2 3 0 6M14 5q4 5 0 10M17 3q5 7 0 14" fill="none" stroke="#eee" stroke-width="1.300"/></svg>
    <svg class="i20" viewBox="0 0 20 20"><path d="M0 0h20v20H0z" fill="#f6d9d9"/><path d="M3 4h4l4 10 3-10h3l-5 13H9z" fill="#b8232b"/></svg>
    <svg class="i20" viewBox="0 0 20 20"><path d="M2 5h17v10H2zM1 8v4" fill="none" stroke="#eee" stroke-width="1.400"/><path d="M4 7h4v6H4z" fill="#eee"/></svg>
    <span>ENG</span>
    <time>3:30 PM<br>2026-06-09</time>
    <svg class="i22" viewBox="0 0 22 22"><path d="M1 2h20v15h-6l-4 4-3-4H1z" fill="none" stroke="#eee" stroke-width="1.400"/></svg>
  </div>
</footer>
</body>
</html>
```
FILE: styles.css
```css
* { box-sizing: border-box; }
body {
  margin: 0;
  min-height: 100vh;
  display: flex;
  flex-direction: column;
  background: #000;
  color: #333;
  font: 14px/20px "Open Sans", "Noto Sans", sans-serif;
}
button, input, select { font: inherit; color: inherit; margin: 0; }
button { background: none; border: 0; padding: 0; display: flex; align-items: center; cursor: pointer; }
a { color: inherit; text-decoration: none; }
h1, h2, h3 { margin: 0; font-weight: 400; font-size: 14px; }
svg { flex: none; display: block; }
.sprite { position: absolute; width: 0; height: 0; }
.spill { overflow: visible; }
.grow { flex: 1; }
.off { color: #a6a6a6; }
.chev { width: 10px; height: 10px; }
.tiny { width: 8px; height: 8px; align-self: flex-start; margin-top: 6px; }
.launch { width: 12px; height: 12px; }
.info { width: 16px; height: 16px; color: #3a93b8; }
.i14 { width: 14px; height: 14px; }
.i18 { width: 18px; height: 18px; }
.i20 { width: 20px; height: 20px; }
.i22 { width: 22px; height: 22px; }
.i24 { width: 24px; height: 24px; }
.i28 { width: 28px; height: 28px; }
.i30 { width: 30px; height: 30px; }
.i38 { width: 38px; height: 38px; }

.app { position: relative; flex: 1; display: flex; flex-direction: column; background: #efefef; border-radius: 8px 8px 0 0; overflow: hidden; }

/* title bar */
.titlebar { height: 60px; display: flex; align-items: center; padding: 0 22px 0 20px; }
.autosave { display: flex; align-items: center; gap: 8px; margin-left: 20px; font-size: 13px; }
.toggle { appearance: none; width: 54px; height: 25px; border: 1px solid #777; border-radius: 13px; background: #fff; padding: 3px; }
.toggle::before { content: ""; display: block; width: 17px; height: 17px; border-radius: 50%; background: #5c5c5c; }
.quick { display: flex; align-items: center; gap: 14px; margin-left: 14px; }
.quick button { gap: 5px; }
.quick button:last-child { margin-left: 5px; }
.filename { gap: 5px; margin-left: 29px; }
.search { width: 460px; height: 40px; margin-left: 92px; display: flex; align-items: center; gap: 14px; padding: 0 16px; background: #fafafa; border: 1px solid #d2d2d2; border-radius: 4px; box-shadow: 0 1px 2px #0002; color: #666; font-size: 16px; }
.search input, .tsearch input { flex: 1; min-width: 0; border: 0; background: none; outline: 0; padding: 0; }
input::placeholder { color: inherit; opacity: 1; }
.wincontrols { margin-left: auto; display: flex; align-items: center; gap: 46px; }
.avatar { width: 30px; height: 30px; border-radius: 50%; background: #6e6a68; color: #ddd; font-size: 12px; line-height: 30px; text-align: center; margin-right: -8px; }

/* ribbon tabs */
.tabs { height: 38px; display: flex; align-items: center; gap: 26px; padding: 0 14px 0 26px; font-size: 16px; }
.tabs a { line-height: 24px; padding-top: 5px; border-bottom: 3px solid transparent; white-space: nowrap; }
.tabs a:first-child { margin-right: 6px; }
.tabs .current { font-weight: 600; border-color: #156b41; }
.tabs .ctx { color: #217346; }
.comments, .share { height: 30px; border-radius: 4px; gap: 6px; padding: 0 8px; }
.comments { border: 1px solid #999; background: #fff; }
.share { background: #0f7040; color: #fff; margin-left: -16px; }

/* ribbon */
.ribbon { height: 124px; margin: 0 9px 0 8px; background: #fff; border-radius: 8px; box-shadow: 0 2px 4px #0003; display: grid; grid-template-columns: 218fr 292fr 374fr 200fr 246fr 182fr 270fr 77fr 43fr; }
.group { min-width: 0; margin: 6px 0 2px; border-right: 1px solid #d4d4d4; display: flex; flex-direction: column; }
.group h2 { height: 22px; font-size: 13px; line-height: 22px; text-align: center; }
.group h2:has(.launch) { display: grid; grid-template-columns: 1fr 12px; align-items: center; padding-right: 3px; }
.tools { flex: 1; display: flex; }
.rows { display: flex; flex-direction: column; gap: 10px; padding-top: 8px; }
.row { height: 30px; display: flex; align-items: center; gap: 8px; }
.bar { width: 1px; height: 30px; background: #d8d8d8; }
.bar.tall { height: 78px; margin: 8px 0 0 3px; }
.clip { padding-left: 24px; gap: 12px; }
.stack { display: flex; flex-direction: column; gap: 12px; padding-top: 4px; }
.stack button { height: 20px; gap: 5px; white-space: nowrap; }
.stack .far { margin-left: 16px; }
.big { flex-direction: column; line-height: 20px; padding-top: 4px; white-space: nowrap; }
.big .i38 { margin-bottom: 5px; }
.big > .chev { margin-top: 5px; }
.big span { display: flex; align-items: center; gap: 5px; }
.pick { display: grid; align-items: center; }
.pick > * { grid-area: 1 / 1; }
.pick .chev { justify-self: end; margin-right: 4px; pointer-events: none; }
.pick select { appearance: none; width: 100%; height: 30px; border: 1px solid #8f8f8f; border-radius: 4px; background: #fff; padding: 0 4px; opacity: 1; }
.fontname { width: 142px; }
.fontsize { width: 62px; }
.group:nth-child(2) .rows { padding-left: 11px; }
.group:nth-child(2) .row { gap: 8px; padding-left: 6px; }
.group:nth-child(2) .row:first-child { gap: 4px; padding-left: 0; }
.fontstep { width: 28px; margin-left: 2px; font-size: 20px; align-items: flex-start; line-height: 28px; }
.fontstep.small { font-size: 17px; }
.fmt { width: 23px; font-size: 17px; justify-content: center; }
.fmt.b { font-weight: 700; }
.fmt.it { font-family: "Liberation Serif", serif; font-style: italic; font-size: 19px; }
.fmt.u { text-decoration: underline; }
.align { padding-left: 11px; }
.tight { gap: 7px; }
.tight .sq { width: 30px; height: 30px; justify-content: center; border: 1px solid transparent; border-radius: 4px; margin-right: -5px; }
.tight .on { background: #e9e9e9; border-color: #8a8a8a; }
.tight .bar { margin-left: 4px; }
.wrapcol { padding-left: 13px; }
.wrapcol .row { gap: 4px; }
.wrapcol .far { margin-left: 20px; }
.numfmt { width: 180px; }
.numfmt select { background: #efefef; border-color: #efefef; }
.group:nth-child(4) .rows { padding-left: 11px; }
.numbers { gap: 11px; padding-left: 9px; }
.sym { font-size: 20px; }
.bigs { justify-content: space-evenly; padding-left: 3px; }
.editing { padding-left: 15px; }
.editing .big { margin-left: 14px; }
.editing .big + .big { margin-left: 11px; }
.collapse { align-self: end; padding: 0 0 10px 18px; }

/* formula bar */
.formulabar { display: flex; align-items: center; height: 30px; margin: 10px 9px 9px 11px; font-size: 15px; }
.namebox, .formula, .fx { height: 30px; background: #fff; border: 1px solid #dcdcdc; border-radius: 4px; display: flex; align-items: center; padding: 0 6px; }
.namebox { width: 125px; }
.namebox input, .formula input { flex: 1; min-width: 0; border: 0; padding: 0; background: none; outline: 0; }
.dots { width: 3px; height: 15px; margin: 0 12px; background: radial-gradient(circle, #333 1px, transparent 2px) 0 0 / 3px 5px; }
.fx { width: 106px; gap: 10px; padding-right: 2px; color: #aaa; }
.fx em { color: #333; font: italic 400 22px/24px "Liberation Serif", serif; }
.fx em + svg { margin-left: -5px; }
.formula { flex: 1; margin-left: 6px; color: #999; }

/* work area */
.work { flex: 1; display: grid; grid-template-columns: 1fr 355px 49px; min-height: 0; }
.book { display: grid; grid-template: 1fr 39px / 1fr 27px; min-width: 0; min-height: 0; }
.sheet { position: relative; overflow: hidden; height: 692px; }
.cells { table-layout: fixed; width: 100%; border-spacing: 0; font-family: Roboto, "Liberation Sans", sans-serif; font-size: 16px; color: #222; }
.rh { width: 34px; } .ca { width: 112px; } .cb { width: 225px; } .cc { width: 193px; } .cd { width: 148px; } .ce { width: 95px; } .cf { width: 95px; } .cg { width: 80px; }
.cells th { font: 16px/20px "Open Sans", sans-serif; color: #666; background: #efefef; padding: 0; text-align: center; }
.cells thead th { height: 23px; border-bottom: 1px solid #a5a5a5; border-right: 1px solid #dedede; }
.cells tbody th { border-right: 1px solid #b5b5b5; border-bottom: 1px solid #e2e2e2; }
.cells .corner { background: linear-gradient(135deg, transparent 50%, #d8d8d8 50%) 14px 6px / 16px 14px no-repeat #efefef; }
.cells td { height: 24px; padding: 1px 9px 0 3px; background: #fff; border-right: 1px solid #e0e0e0; border-bottom: 1px solid #dedede; white-space: nowrap; line-height: 20px; }
.cells td:nth-child(3) { text-align: right; }
.data td:nth-child(2), .data td:nth-child(3) { border-bottom-color: #fff; }
.data td:nth-child(2) { border-right-color: #fff; }
.head td:nth-child(-n+3), .total td:nth-child(-n+3) { background: #b9e8fb; border-color: #b9e8fb; color: #111; font-weight: 700; }
.head td:nth-child(-n+3) { border-bottom-color: #7cc3e0; }
.total td:nth-child(-n+3) { box-shadow: inset 0 1px #7cc3e0; }
.head td:nth-child(2) { padding-right: 0; }
.rl { display: flex; align-items: center; justify-content: space-between; }
.rl button { width: 20px; height: 20px; justify-content: center; background: #fff; border: 1px solid #b5b5c5; color: #666; font-size: 12px; }

/* chart floats over the grid */
.chart { position: absolute; left: 547px; top: 55px; overflow: visible; }
.axis text { font: 14px "Liberation Sans", sans-serif; fill: #595959; text-anchor: middle; }
.values text { font: 15px "Liberation Sans", sans-serif; fill: #1783b0; text-anchor: middle; }
.series { fill: none; stroke: #0a7fb5; stroke-width: 4; stroke-linejoin: round; marker: url(#dot); }
.boxes path { fill: none; stroke: #666; marker: url(#grip); }
.chartbtns { position: absolute; left: 1160px; top: 53px; display: grid; gap: 12px; }
.chartbtns button { width: 35px; height: 35px; background: #fff; border: 1px solid #777; justify-content: center; }
.cursor { position: absolute; left: 1363px; top: 594px; width: 17px; height: 17px; }
.copilot { position: absolute; right: 30px; bottom: 31px; width: 54px; height: 54px; border-radius: 17px; background: #fff; border: 1px solid #ddd; box-shadow: 0 3px 8px #0003; justify-content: center; }

/* scroll bars */
.vscroll, .pscroll { display: flex; flex-direction: column; align-items: center; }
.vscroll { padding: 5px 0 4px; gap: 6px; }
.thumb { background: #6b6b6b; border-radius: 6px; }
.up, .down { border: 6px solid transparent; border-top: 0; border-bottom: 9px solid #666; }
.down { border-bottom: 0; border-top: 9px solid #666; }
.left, .right { border: 6px solid transparent; border-left: 0; border-right: 9px solid #666; }
.right { border-right: 0; border-left: 9px solid #666; }
.vscroll .thumb { width: 11px; height: 325px; }

/* sheet tabs */
.sheettabs { grid-column: 1 / 3; display: flex; align-items: center; border-top: 1px solid #dcdcdc; padding: 0 30px 0 29px; }
.nav { color: #888; margin-right: 26px; }
.tab { font-size: 16px; line-height: 24px; padding: 0 14px; }
.tab:not(.active) { margin-left: 29px; border-right: 1px solid #ccc; }
.active { font-weight: 700; color: #222; background: #fff; border-radius: 0 0 6px 6px; padding: 2px 11px 6px; align-self: flex-start; margin: 0 57px 0 5px; }
.tab.active span { display: block; line-height: 27px; border-bottom: 2px solid #156b41; }
.hscroll { width: 545px; display: flex; align-items: center; gap: 5px; margin-left: 13px; }
.hscroll .thumb { height: 11px; width: 497px; margin-right: auto; }

/* format pane */
.pane { background: #f8f8f8; border-left: 1px solid #dcdcdc; position: relative; padding-left: 13px; display: flex; flex-direction: column; }
.panehead { display: flex; gap: 26px; padding: 15px 21px 0 0; height: 51px; align-items: flex-start; }
.panehead h1 { flex: 1; font-size: 17px; line-height: 24px; font-weight: 600; color: #222; }
.panehead svg { margin-top: 4px; }
.panetabs { display: flex; align-items: center; gap: 32px; height: 44px; }
.panetabs svg { color: #3a93c8; margin: 4px -27px 0 5px; }
.panetabs a { line-height: 28px; padding: 3px 0 4px; border-bottom: 3px solid transparent; }
.panetabs .current { font-weight: 600; border-color: #156b41; }
.paneicons { display: flex; gap: 10px; padding: 12px 0 17px; margin-right: 14px; border-bottom: 1px solid #d2d2d2; color: #666; padding-left: 2px; }
.paneicons button { width: 40px; height: 40px; justify-content: center; border: 1px solid transparent; border-radius: 5px; }
.paneicons .on { background: #e9e9e9; border-color: #7c7c7c; }
.notch { width: 18px; height: 10px; margin: -10px 0 0 161px; position: relative; }
.panebody { display: flex; justify-content: space-between; padding-right: 16px; }
.opts { width: 302px; padding: 9px 0 0 28px; }
.sub { padding-left: 12px; }
.opt { display: flex; align-items: center; gap: 6px; height: 24px; margin-bottom: 8px; }
.opt input { appearance: none; width: 16px; height: 16px; border: 1px solid #999; border-radius: 2px; background: #fff; }
.opt input[type=checkbox]:checked { background: #0f7040; border-color: #0f7040; }
.opt input[type=checkbox]:checked::before { content: ""; display: block; width: 9px; height: 5px; margin: 3px 0 0 3px; border: solid #fff; border-width: 0 0 2px 2px; rotate: -45deg; }
.opt input[type=radio] { border-radius: 50%; }
.opt input[type=radio]:checked { border: 4px solid #0f7040; }
.sep { display: flex; align-items: center; justify-content: space-between; height: 30px; }
.sepsel { width: 121px; }
.sepsel select, .cat select { height: 28px; padding-left: 6px; }
.btn { height: 30px; border: 1px solid #999; border-radius: 4px; background: #fff; justify-content: center; }
.reset { width: 130px; margin-top: 5px; }
.lp { margin: 8px 0; }
.radios { padding-top: 6px; }
.radios .opt { margin-bottom: 5px; }
.opts h3 { display: flex; align-items: center; gap: 7px; font-weight: 700; color: #222; margin: 20px 0 8px -21px; line-height: 20px; }
.cap { display: flex; gap: 10px; }
.line { display: flex; gap: 11px; align-items: center; }
.catline { margin-top: 5px; height: 28px; margin-right: -8px; }
.catline .info { margin-left: -7px; margin-bottom: 10px; }
.pick.cat { width: 254px; }
.code { margin-top: 28px; margin-bottom: 5px; }
.codebox { width: 211px; height: 29px; border: 2px solid #1a1a1a; border-radius: 4px; background: #efefef; padding: 0 6px; color: #444; }
.addbtn { width: 51px; }
.linked { margin-top: 6px; }
.pscroll { width: 20px; padding: 8px 0 6px; background: #f1f1f1; border-radius: 8px; gap: 6px; height: 540px; margin-top: 5px; }
.pscroll .thumb { width: 11px; height: 372px; }
.rail { background: #fcfcfc; display: flex; flex-direction: column; align-items: flex-end; padding-top: 12px; gap: 13px; }
.rail button { width: 49px; height: 50px; justify-content: center; }
.rail button:first-child { height: 24px; }
.rail .on { border: 1px solid #7c7c7c; border-radius: 6px; background: #ededed; }

/* status bar */
.status { height: 28px; display: flex; align-items: center; padding-left: 14px; border-top: 1px solid #fafafa; background: #f1f1f1; font-size: 12px; }
.rec { margin-left: 26px; }
.status button { width: 50px; height: 27px; justify-content: center; }
.status .on { background: #dcdcdc; }
.zoom { display: flex; align-items: center; gap: 5px; font-size: 18px; margin-left: 8px; }
.zoom input { appearance: none; width: 125px; height: 15px; background: linear-gradient(#777, #777) center / 100% 1px no-repeat; }
.zoom input::-webkit-slider-thumb { appearance: none; width: 6px; height: 14px; background: #666; }
.pct { margin: 0 11px 0 17px; }

/* translucent brand mark over the window */
.watermark { position: absolute; left: 464px; top: 222px; pointer-events: none; overflow: visible; }
.wm1 { font: 700 136px "DejaVu Sans", sans-serif; fill: #4650b4; fill-opacity: .08; text-anchor: middle; }
.wm2 { font: 200 60px "DejaVu Sans", sans-serif; fill: #646478; fill-opacity: .12; text-anchor: middle; }

/* task bar */
.taskbar { height: 49px; display: flex; align-items: stretch; background: #1c1d1c; color: #eee; }
.start { width: 60px; justify-content: center; }
.tsearch { width: 360px; background: #333; display: flex; align-items: center; gap: 12px; padding: 0 12px 0 15px; color: #ccc; font-size: 17px; border-left: 1px solid #555; border-right: 1px solid #555; }
.spark { width: 78px; height: 40px; }
.pin { width: 62px; justify-content: center; }
.pin:nth-of-type(2) { margin-left: 3px; }
.task { width: 191px; height: 49px; margin-left: 6px; padding: 0 8px; gap: 5px; border-bottom: 3px solid #5bb4d8; white-space: nowrap; }
.task + .task { margin-left: 9px; }
.task.active { width: 200px; font-weight: 400; color: #eee; border-radius: 0; margin: 0 0 0 6px; background: #4a4a4a; padding: 0 12px; gap: 8px; }
.tray { display: flex; align-items: center; gap: 10px; padding-right: 30px; }
.tray time { text-align: center; line-height: 24px; margin: 0 14px 0 7px; }
```
